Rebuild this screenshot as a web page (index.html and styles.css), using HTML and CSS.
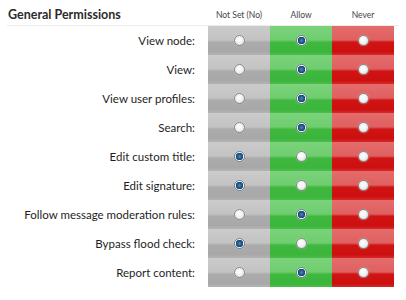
FILE: index.html
```html
<!DOCTYPE html>
<html>
<head>
<meta charset="utf-8">
<link rel="stylesheet" href="styles.css">
</head>
<body>
<div class="perms">
  <div class="head">
    <h3 class="title">General Permissions</h3>
    <div class="colhead">Not Set (No)</div>
    <div class="colhead">Allow</div>
    <div class="colhead">Never</div>
  </div>
  <div class="row">
    <div class="label">View node:</div>
    <div class="cell unset"><span class="radio"></span></div>
    <div class="cell allow"><span class="radio on"></span></div>
    <div class="cell never"><span class="radio"></span></div>
  </div>
  <div class="row">
    <div class="label">View:</div>
    <div class="cell unset"><span class="radio"></span></div>
    <div class="cell allow"><span class="radio on"></span></div>
    <div class="cell never"><span class="radio"></span></div>
  </div>
  <div class="row">
    <div class="label">View user profiles:</div>
    <div class="cell unset"><span class="radio"></span></div>
    <div class="cell allow"><span class="radio on"></span></div>
    <div class="cell never"><span class="radio"></span></div>
  </div>
  <div class="row">
    <div class="label">Search:</div>
    <div class="cell unset"><span class="radio"></span></div>
    <div class="cell allow"><span class="radio on"></span></div>
    <div class="cell never"><span class="radio"></span></div>
  </div>
  <div class="row">
    <div class="label">Edit custom title:</div>
    <div class="cell unset"><span class="radio on"></span></div>
    <div class="cell allow"><span class="radio"></span></div>
    <div class="cell never"><span class="radio"></span></div>
  </div>
  <div class="row">
    <div class="label">Edit signature:</div>
    <div class="cell unset"><span class="radio on"></span></div>
    <div class="cell allow"><span class="radio"></span></div>
    <div class="cell never"><span class="radio"></span></div>
  </div>
  <div class="row">
    <div class="label">Follow message moderation rules:</div>
    <div class="cell unset"><span class="radio"></span></div>
    <div class="cell allow"><span class="radio on"></span></div>
    <div class="cell never"><span class="radio"></span></div>
  </div>
  <div class="row">
    <div class="label">Bypass flood check:</div>
    <div class="cell unset"><span class="radio on"></span></div>
    <div class="cell allow"><span class="radio"></span></div>
    <div class="cell never"><span class="radio"></span></div>
  </div>
  <div class="row">
    <div class="label">Report content:</div>
    <div class="cell unset"><span class="radio"></span></div>
    <div class="cell allow"><span class="radio on"></span></div>
    <div class="cell never"><span class="radio"></span></div>
  </div>
</div>
</body>
</html>
```
FILE: styles.css
```css
html, body {
  margin: 0;
  padding: 0;
  background: #ffffff;
}
body {
  font-family: Lato, "Liberation Sans", sans-serif;
  color: #222;
}
.perms {
  width: 394px;
}
.head {
  display: grid;
  grid-template-columns: 201px 62px 62px 62px;
  height: 25px;
  border-bottom: 1px solid #ececec;
  margin-left: 7px;
  margin-right: -5px;
  align-items: center;
}
.head .title {
  margin: 0;
  padding: 3px 0 0 1px;
  font-size: 12.5px;
  font-weight: bold;
  color: #2b2b2b;
}
.colhead {
  font-size: 8.5px;
  color: #444;
  text-align: center;
  padding-top: 5px;
}
.row {
  display: grid;
  grid-template-columns: 208px 62px 62px 62px;
  height: 29px;
}
.label {
  text-align: right;
  padding-right: 13px;
  font-size: 11.5px;
  line-height: 29px;
  color: #1e1e1e;
}
.cell {
  display: flex;
  align-items: center;
  justify-content: center;
}
.unset {
  background: linear-gradient(to bottom, #cbcbcb 0%, #c3c3c3 48%, #ababab 56%, #a8a8a8 88%, #b4b4b4 100%);
}
.allow {
  background: linear-gradient(to bottom, #7bd37b 0%, #6fcd6f 48%, #40b840 56%, #3bb53b 88%, #4bbd4b 100%);
}
.never {
  background: linear-gradient(to bottom, #e56c6c 0%, #df6060 48%, #d01414 56%, #cc1010 88%, #d52a2a 100%);
}
.radio {
  width: 9px;
  height: 9px;
  border-radius: 50%;
  border: 1px solid #8a8a8a;
  background: radial-gradient(circle at 45% 40%, #ffffff 0%, #f2f2f2 45%, #cfcfcf 100%);
  box-shadow: 0 0 1px rgba(255,255,255,0.6);
}
.radio.on {
  border-color: #6a7d8d;
  background: radial-gradient(circle at 50% 50%, #4d86b3 0%, #1b4f7c 45%, #15466f 55%, #ffffff 62%, #e6e6e6 100%);
}
```
